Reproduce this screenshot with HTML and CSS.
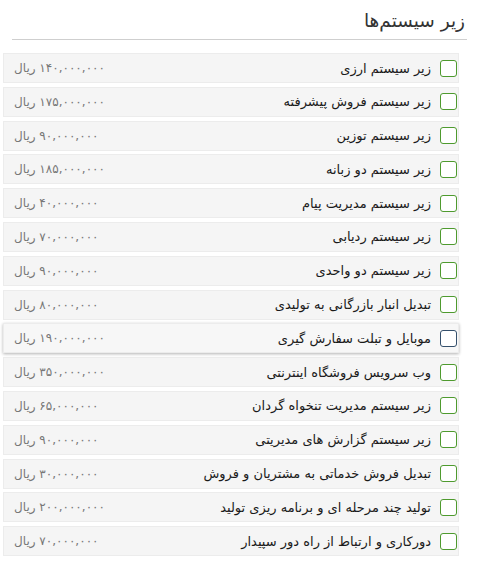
FILE: index.html
```html
<!DOCTYPE html>
<html lang="fa" dir="rtl">
<head>
    <meta charset="UTF-8">
    <meta name="viewport" content="width=device-width, initial-scale=1.0">
    <title>زیر سیستم‌ها</title>
    <link rel="stylesheet" href="styles.css">
</head>
<body>
    <div class="panel">
        <h2 class="title">زیر سیستم‌ها</h2>

        <!-- لیست زیر سیستم‌ها -->
        <ul class="subsystems">
            <li class="item"><input type="checkbox" class="check"><span class="name">زیر سیستم ارزی</span><span class="price">۱۴۰,۰۰۰,۰۰۰ ریال</span></li>
            <li class="item"><input type="checkbox" class="check"><span class="name">زیر سیستم فروش پیشرفته</span><span class="price">۱۷۵,۰۰۰,۰۰۰ ریال</span></li>
            <li class="item"><input type="checkbox" class="check"><span class="name">زیر سیستم توزین</span><span class="price">۹۰,۰۰۰,۰۰۰ ریال</span></li>
            <li class="item"><input type="checkbox" class="check"><span class="name">زیر سیستم دو زبانه</span><span class="price">۱۸۵,۰۰۰,۰۰۰ ریال</span></li>
            <li class="item"><input type="checkbox" class="check"><span class="name">زیر سیستم مدیریت پیام</span><span class="price">۴۰,۰۰۰,۰۰۰ ریال</span></li>
            <li class="item"><input type="checkbox" class="check"><span class="name">زیر سیستم ردیابی</span><span class="price">۷۰,۰۰۰,۰۰۰ ریال</span></li>
            <li class="item"><input type="checkbox" class="check"><span class="name">زیر سیستم دو واحدی</span><span class="price">۹۰,۰۰۰,۰۰۰ ریال</span></li>
            <li class="item"><input type="checkbox" class="check"><span class="name">تبدیل انبار بازرگانی به تولیدی</span><span class="price">۸۰,۰۰۰,۰۰۰ ریال</span></li>
            <li class="item active"><input type="checkbox" class="check"><span class="name">موبایل و تبلت سفارش گیری</span><span class="price">۱۹۰,۰۰۰,۰۰۰ ریال</span></li>
            <li class="item"><input type="checkbox" class="check"><span class="name">وب سرویس فروشگاه اینترنتی</span><span class="price">۳۵۰,۰۰۰,۰۰۰ ریال</span></li>
            <li class="item"><input type="checkbox" class="check"><span class="name">زیر سیستم مدیریت تنخواه گردان</span><span class="price">۶۵,۰۰۰,۰۰۰ ریال</span></li>
            <li class="item"><input type="checkbox" class="check"><span class="name">زیر سیستم گزارش های مدیریتی</span><span class="price">۹۰,۰۰۰,۰۰۰ ریال</span></li>
            <li class="item"><input type="checkbox" class="check"><span class="name">تبدیل فروش خدماتی به مشتریان و فروش</span><span class="price">۳۰,۰۰۰,۰۰۰ ریال</span></li>
            <li class="item"><input type="checkbox" class="check"><span class="name">تولید چند مرحله ای و برنامه ریزی تولید</span><span class="price">۲۰۰,۰۰۰,۰۰۰ ریال</span></li>
            <li class="item"><input type="checkbox" class="check"><span class="name">دورکاری و ارتباط از راه دور سپیدار</span><span class="price">۷۰,۰۰۰,۰۰۰ ریال</span></li>
        </ul>
    </div>
</body>
</html>
```

FILE: styles.css
```css
body {
    font-family: "DejaVu Sans", "Noto Sans", sans-serif;
    background-color: #fff;
    color: #222;
    margin: 0;
    padding: 0;
}
.panel {
    width: 481px;
}
.title {
    font-size: 18.5px;
    font-weight: normal;
    color: #333;
    margin: 0 14px 0 12px;
    padding: 10px 2px 7px 0;
    line-height: 22px;
    border-bottom: 1px solid #cfcfcf;
}
.subsystems {
    list-style: none;
    margin: 13px 22px 0 3px;
    padding: 0;
    display: flex;
    flex-direction: column;
    gap: 3.8px;
}
.item {
    display: flex;
    align-items: center;
    height: 28px;
    padding: 0 1px 0 10px;
    background-color: #f5f5f5;
    border: 1px solid #ececec;
    font-size: 13px;
}
.item.active {
    background-color: #f7f7f7;
    box-shadow: 0 1px 3px rgba(0, 0, 0, 0.3);
}
.check {
    appearance: none;
    width: 17px;
    height: 17px;
    margin: 0;
    background-color: #fff;
    border: 1px solid #4e9a2e;
    border-radius: 3px;
    box-sizing: border-box;
    flex-shrink: 0;
}
.item.active .check {
    border-color: #35506c;
}
.name {
    margin-right: 9px;
    color: #1a1a1a;
}
.price {
    margin-right: auto;
    color: #777;
    font-size: 12px;
}
```
